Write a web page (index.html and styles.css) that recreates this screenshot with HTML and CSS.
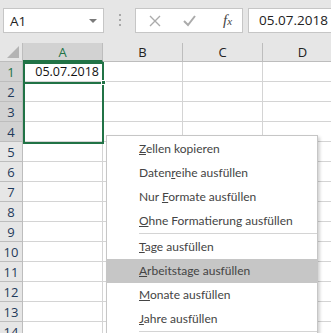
FILE: index.html
```html
<!DOCTYPE html>
<html lang="de">
<head>
    <meta charset="UTF-8" />
    <title>Ausfüllen</title>
    <link rel="stylesheet" href="styles.css">
</head>
<body>

    <div class="formula-bar">
        <div class="name-box">
            <span>A1</span>
            <span class="drop-arrow"></span>
        </div>
        <div class="grip"><span></span><span></span><span></span></div>
        <div class="fx-buttons">
            <svg class="fx-icon" width="12" height="12" viewBox="0 0 12 12">
                <path d="M1 1 L11 11 M11 1 L1 11" stroke="#ababab" stroke-width="1.4" fill="none" />
            </svg>
            <svg class="fx-icon" width="13" height="12" viewBox="0 0 13 12">
                <path d="M1 6 L5 10 L12 1" stroke="#ababab" stroke-width="2" fill="none" />
            </svg>
            <span class="fx-text">f<small>x</small></span>
        </div>
        <div class="formula-input">05.07.2018</div>
    </div>

    <div class="sheet">
        <div class="grid">
            <div class="corner"><span class="corner-tri"></span></div>
            <div class="col-head active">A</div>
            <div class="col-head">B</div>
            <div class="col-head">C</div>
            <div class="col-head">D</div>

            <div class="row-head active">1</div>
            <div class="cell date">05.07.2018</div><div class="cell"></div><div class="cell"></div><div class="cell"></div>
            <div class="row-head sel">2</div>
            <div class="cell"></div><div class="cell"></div><div class="cell"></div><div class="cell"></div>
            <div class="row-head sel">3</div>
            <div class="cell"></div><div class="cell"></div><div class="cell"></div><div class="cell"></div>
            <div class="row-head sel">4</div>
            <div class="cell"></div><div class="cell"></div><div class="cell"></div><div class="cell"></div>
            <div class="row-head">5</div>
            <div class="cell"></div><div class="cell"></div><div class="cell"></div><div class="cell"></div>
            <div class="row-head">6</div>
            <div class="cell"></div><div class="cell"></div><div class="cell"></div><div class="cell"></div>
            <div class="row-head">7</div>
            <div class="cell"></div><div class="cell"></div><div class="cell"></div><div class="cell"></div>
            <div class="row-head">8</div>
            <div class="cell"></div><div class="cell"></div><div class="cell"></div><div class="cell"></div>
            <div class="row-head">9</div>
            <div class="cell"></div><div class="cell"></div><div class="cell"></div><div class="cell"></div>
            <div class="row-head">10</div>
            <div class="cell"></div><div class="cell"></div><div class="cell"></div><div class="cell"></div>
            <div class="row-head">11</div>
            <div class="cell"></div><div class="cell"></div><div class="cell"></div><div class="cell"></div>
            <div class="row-head">12</div>
            <div class="cell"></div><div class="cell"></div><div class="cell"></div><div class="cell"></div>
            <div class="row-head">13</div>
            <div class="cell"></div><div class="cell"></div><div class="cell"></div><div class="cell"></div>
            <div class="row-head">14</div>
            <div class="cell"></div><div class="cell"></div><div class="cell"></div><div class="cell"></div>
        </div>

        <!-- selection A1:A4 with active cell line and fill handle -->
        <div class="selection">
            <div class="active-line"></div>
            <div class="fill-handle"></div>
        </div>

        <!-- fill options menu -->
        <ul class="context-menu">
            <li><u>Z</u>ellen kopieren</li>
            <li>Daten<u>r</u>eihe ausfüllen</li>
            <li>Nur <u>F</u>ormate ausfüllen</li>
            <li><u>O</u>hne Formatierung ausfüllen</li>
            <li class="separator"></li>
            <li><u>T</u>age ausfüllen</li>
            <li class="hover"><u>A</u>rbeitstage ausfüllen</li>
            <li><u>M</u>onate ausfüllen</li>
            <li><u>J</u>ahre ausfüllen</li>
            <li class="separator"></li>
        </ul>
    </div>

</body>
</html>
```

FILE: styles.css
```css
/* Excel-ish colours */
:root {
    --bar-bg: #e6e6e6;
    --box-border: #c6c6c6;
    --grid-line: #d4d4d4;
    --head-line: #bdbdbd;
    --excel-green: #217346;
    --text: #333333;
    --menu-text: #444444;
}

* {
    margin: 0;
    padding: 0;
    box-sizing: border-box;
}

html, body {
    width: 331px;
    height: 333px;
    overflow: hidden;
    background: #ffffff;
    font-family: 'Open Sans', 'Noto Sans', sans-serif;
    color: var(--text);
}

/* Formula bar */
.formula-bar {
    display: flex;
    align-items: flex-start;
    height: 43px;
    padding-top: 8px;
    background: var(--bar-bg);
}

.name-box {
    display: flex;
    align-items: center;
    justify-content: space-between;
    margin-left: 3px;
    width: 101px;
    height: 25px;
    padding: 0 6px 0 6px;
    background: #ffffff;
    border: 1px solid var(--box-border);
    font-size: 13.5px;
    color: #222;
}

.drop-arrow {
    width: 0;
    height: 0;
    border-left: 4px solid transparent;
    border-right: 4px solid transparent;
    border-top: 4px solid #7a7a7a;
}

.grip {
    display: flex;
    flex-direction: column;
    gap: 3px;
    width: 31px;
    padding: 6px 0 0 15px;
}

.grip span {
    width: 2px;
    height: 2px;
    background: #a8a8a8;
}

.fx-buttons {
    display: flex;
    align-items: center;
    width: 108px;
    height: 25px;
    padding-left: 13px;
    background: #ffffff;
    border: 1px solid var(--box-border);
}

.fx-icon {
    display: block;
}

.fx-icon + .fx-icon {
    margin-left: 22px;
}

.fx-text {
    margin-left: 27px;
    font-family: 'Liberation Serif', serif;
    font-style: italic;
    font-size: 15px;
    color: #444;
}

.fx-text small {
    font-size: 11px;
}

.formula-input {
    height: 25px;
    margin-left: 5px;
    flex: 1;
    padding: 2px 0 0 10px;
    background: #ffffff;
    border: 1px solid var(--box-border);
    border-right: none;
    font-size: 13.5px;
    color: #222;
}

/* Sheet */
.sheet {
    position: relative;
}

.grid {
    display: grid;
    grid-template-columns: 23px 80px 80px 80px 80px;
    grid-template-rows: 19px repeat(14, 20px);
    width: 343px;
}

.corner,
.col-head,
.row-head {
    background: var(--bar-bg);
    border-right: 1px solid var(--head-line);
    border-bottom: 1px solid var(--head-line);
    font-size: 13px;
    display: flex;
    align-items: center;
    justify-content: center;
}

.corner {
    position: relative;
}

.corner-tri {
    position: absolute;
    right: 3px;
    bottom: 3px;
    width: 0;
    height: 0;
    border-left: 12px solid transparent;
    border-bottom: 12px solid #b4b4b4;
}

.col-head {
    color: #222;
}

.col-head.active {
    background: #d2d2d2;
    color: var(--excel-green);
    border-bottom: 2px solid var(--excel-green);
}

.row-head {
    color: #1f3a5a;
}

.row-head.active,
.row-head.sel {
    background: #d2d2d2;
}

.row-head.active {
    color: var(--excel-green);
}

.cell {
    border-right: 1px solid var(--grid-line);
    border-bottom: 1px solid var(--grid-line);
}

.cell.date {
    display: flex;
    align-items: center;
    justify-content: flex-end;
    padding-right: 3px;
    font-size: 12.5px;
    color: #111;
}

.selection {
    position: absolute;
    left: 23px;
    top: 19px;
    width: 81px;
    height: 82px;
    border: 2px solid var(--excel-green);
}

.active-line {
    position: absolute;
    left: 0;
    right: 0;
    top: 18px;
    height: 2px;
    background: var(--excel-green);
}

.fill-handle {
    position: absolute;
    right: -4px;
    top: 16px;
    width: 5px;
    height: 5px;
    background: var(--excel-green);
    border: 1px solid #ffffff;
}

/* Context menu */
.context-menu {
    position: absolute;
    left: 106px;
    top: 92px;
    width: 212px;
    height: 250px;
    padding-top: 1px;
    list-style: none;
    background: #ffffff;
    border: 1px solid var(--box-border);
    box-shadow: 2px 2px 3px rgba(0, 0, 0, 0.18);
    font-family: 'Lato', 'Open Sans', sans-serif;
    font-size: 12px;
    color: var(--menu-text);
}

.context-menu li {
    height: 24px;
    line-height: 24px;
    padding-left: 32px;
}

.context-menu li.separator {
    height: 2px;
    margin-left: 32px;
    padding: 0;
    border-top: 1px solid #d4d4d4;
}

.context-menu li.hover {
    background: #c6c6c6;
}
```
